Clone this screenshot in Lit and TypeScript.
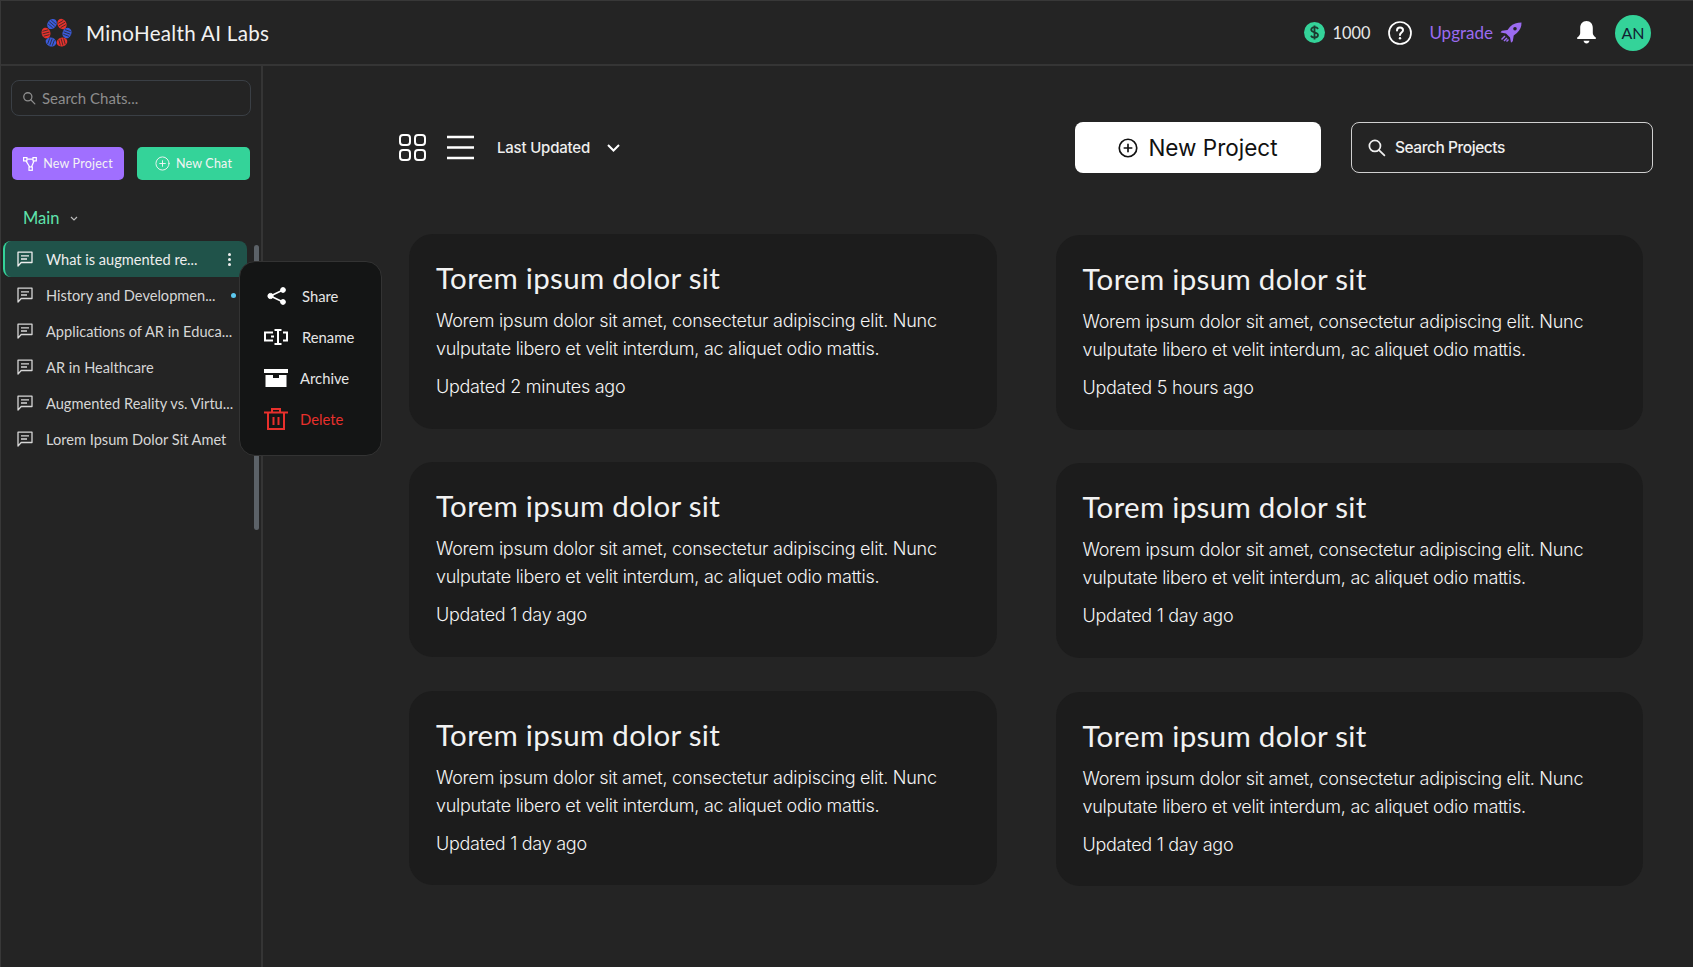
import { LitElement, css, html, svg } from "lit";
import { customElement } from "lit/decorators.js";

const CHATS = [
  "What is augmented re...",
  "History and Developmen...",
  "Applications of AR in Educa...",
  "AR in Healthcare",
  "Augmented Reality vs. Virtu...",
  "Lorem Ipsum Dolor Sit Amet",
];

const LEFT_TIMES = ["Updated 2 minutes ago", "Updated 1 day ago", "Updated 1 day ago"];
const RIGHT_TIMES = ["Updated 5 hours ago", "Updated 1 day ago", "Updated 1 day ago"];

const searchIcon = (size: number) => html`<svg width=${size} height=${size} viewBox="0 0 24 24" fill="none" stroke="currentColor" stroke-width="2.2" stroke-linecap="round"><circle cx="10" cy="10" r="7"></circle><path d="M15.5 15.5L22 22"></path></svg>`;

const plusCircle = (size: number, sw: number) => html`<svg width=${size} height=${size} viewBox="0 0 24 24" fill="none" stroke="currentColor" stroke-width=${sw} stroke-linecap="round"><circle cx="12" cy="12" r="10.5"></circle><path d="M12 7.5v9M7.5 12h9"></path></svg>`;

const chatIcon = html`<svg class="chat-icon" width="16" height="16" viewBox="0 0 16 16" fill="none" stroke="currentColor" stroke-width="1.3"><path d="M1 1.2h14v10.3H4.2L1 15z" stroke-linejoin="round"></path><path d="M4 4.8h8M4 8h6"></path></svg>`;

const logoPods = [
  { x: 52, y: 24, rot: 40, c: "#3b5bdb" },
  { x: 62, y: 24, rot: -30, c: "#e5322d" },
  { x: 67, y: 33, rot: 20, c: "#3b5bdb" },
  { x: 62, y: 42, rot: 75, c: "#e5322d" },
  { x: 51, y: 42, rot: -70, c: "#3b5bdb" },
  { x: 46, y: 33, rot: -15, c: "#e5322d" },
];

const logo = html`<svg class="logo" width="32" height="32" viewBox="40 17 32 32">
  ${logoPods.map(
    (p) => svg`<g transform="translate(${p.x} ${p.y}) rotate(${p.rot})">
      <ellipse rx="4.4" ry="5.4" fill=${p.c}></ellipse>
      <path d="M-3 -2.5L3 -2.5M-3.6 0L3.6 0M-3 2.5L3 2.5" stroke="#242424" stroke-width="0.7"></path>
    </g>`
  )}
</svg>`;

@customElement("app-root")
export class AppRoot extends LitElement {
  static override styles = css`
    :host {
      display: flex;
      flex-direction: column;
      height: 967px;
      box-sizing: border-box;
      overflow: hidden;
      background: #242424;
      border-top: 1px solid #383838;
      border-left: 1px solid #383838;
      font-family: "Lato", "Noto Sans", sans-serif;
      color: #fff;
    }

    * {
      box-sizing: border-box;
    }

    .topbar {
      display: flex;
      align-items: center;
      flex: none;
      height: 65px;
      padding: 0 42px 0 39px;
      border-bottom: 2px solid #353535;
    }

    .logo {
      margin-right: 14px;
    }

    .brand {
      font-size: 20.6px;
      letter-spacing: 0.3px;
      color: #f2f2f2;
    }

    .top-right {
      display: flex;
      align-items: center;
      margin-left: auto;
    }

    .credits {
      margin-left: 8px;
      font-size: 16.3px;
      color: #e8e8e8;
    }

    .help {
      margin-left: 18px;
    }

    .upgrade {
      margin-left: 17px;
      font-size: 17px;
      color: #9b6bf0;
    }

    .rocket {
      margin-left: 7px;
    }

    .bell {
      margin-left: 55px;
    }

    .avatar {
      display: flex;
      align-items: center;
      justify-content: center;
      width: 36px;
      height: 36px;
      margin-left: 19px;
      border-radius: 50%;
      background: #34d399;
      color: #123;
      font-size: 16px;
    }

    .body {
      display: flex;
      flex: 1;
      min-height: 0;
    }

    .sidebar {
      position: relative;
      flex: none;
      width: 262px;
      padding-top: 14px;
      border-right: 2px solid #353535;
    }

    .chat-search {
      display: flex;
      align-items: center;
      gap: 6px;
      width: 240px;
      height: 36px;
      margin-left: 10px;
      padding-left: 10px;
      border: 1px solid #3a3f45;
      border-radius: 8px;
      color: #8d8d8d;
      font-size: 15px;
    }

    .actions {
      display: flex;
      justify-content: space-between;
      width: 238px;
      margin: 31px 0 0 11px;
    }

    .action {
      display: flex;
      align-items: center;
      justify-content: center;
      gap: 6px;
      width: 112px;
      height: 33px;
      border-radius: 5px;
      font-size: 12.5px;
      letter-spacing: 0.2px;
      color: #f4f4f4;
    }

    .action.purple {
      background: #a06fff;
    }

    .action.green {
      width: 113px;
      background: #34d399;
    }

    .section {
      display: flex;
      align-items: center;
      gap: 11px;
      height: 20px;
      margin: 28px 0 13px 22px;
      font-size: 16.5px;
      color: #5fe3ac;
    }

    .chat-list {
      display: flex;
      flex-direction: column;
      width: 244px;
      margin-left: 2px;
    }

    .chat {
      display: flex;
      align-items: center;
      height: 36px;
      padding-left: 14px;
      font-size: 14.6px;
      color: #d6d6d6;
      white-space: nowrap;
    }

    .chat.active {
      border-left: 2px solid #34d399;
      border-radius: 8px;
      padding-left: 12px;
      background: #20534a;
      color: #eee;
    }

    .chat-icon {
      flex: none;
      margin-right: 13px;
    }

    .kebab {
      display: flex;
      flex-direction: column;
      gap: 2px;
      margin-left: auto;
      margin-right: 16px;
    }

    .kebab i {
      width: 3px;
      height: 3px;
      border-radius: 50%;
      background: #eee;
    }

    .dot {
      position: absolute;
      left: 230px;
      top: 227px;
      width: 5px;
      height: 5px;
      border-radius: 50%;
      background: #5cc8ef;
    }

    .thumb {
      position: absolute;
      left: 253px;
      top: 179px;
      width: 5px;
      height: 285px;
      border-radius: 3px;
      background: #5c6268;
    }

    .menu {
      position: absolute;
      left: 238px;
      top: 195px;
      display: flex;
      flex-direction: column;
      width: 143px;
      height: 195px;
      padding-top: 13px;
      border: 1px solid #333;
      border-radius: 16px;
      background: #141515;
      font-size: 14.8px;
      color: #e6e6e6;
    }

    .menu-item {
      display: flex;
      align-items: center;
      height: 41px;
      padding-left: 24px;
    }

    .menu-item svg {
      flex: none;
      margin-right: 12px;
    }

    .menu-item .share-icon {
      margin-left: 3px;
      margin-right: 15px;
    }

    .menu-item .rename-icon {
      margin-right: 14px;
    }

    .menu-item.delete {
      color: #e8302c;
    }

    .main {
      flex: 1;
      min-width: 0;
      padding: 56px 40px 0 136px;
    }

    .toolbar {
      display: flex;
      align-items: center;
      height: 51px;
    }

    .sort {
      margin-left: 23px;
      font-family: "Inter", sans-serif;
      font-size: 15px;
      font-weight: 500;
      letter-spacing: -0.2px;
      color: #eee;
    }

    .sort-chevron {
      margin-left: 17px;
    }

    .view-list {
      margin-left: 21px;
    }

    .new-project {
      display: flex;
      align-items: center;
      justify-content: center;
      gap: 10px;
      width: 246px;
      height: 51px;
      margin-left: auto;
      border-radius: 8px;
      background: #fff;
      color: #111;
      font-family: "Inter", sans-serif;
      font-size: 22.5px;
    }

    .project-search {
      display: flex;
      align-items: center;
      gap: 9px;
      width: 302px;
      height: 51px;
      margin-left: 30px;
      padding-left: 15px;
      border: 1px solid #d0d0d0;
      border-radius: 8px;
      color: #f0f0f0;
      font-family: "Inter", sans-serif;
      font-size: 15.5px;
      font-weight: 500;
      letter-spacing: -0.45px;
    }

    .columns {
      display: flex;
      gap: 59px;
      margin: 61px 10px 0 10px;
    }

    .column {
      display: flex;
      flex: 1;
      flex-direction: column;
      gap: 33.8px;
    }

    .column + .column {
      padding-top: 1px;
    }

    .card {
      height: 194.5px;
      padding: 24px 27px 0;
      border-radius: 24px;
      background: #1c1c1c;
    }

    .card h2 {
      margin: 0;
      font-size: 29.5px;
      font-weight: 400;
      line-height: 40px;
      letter-spacing: 0.3px;
      color: #f2f2f2;
    }

    .card p {
      margin: 9px 0 0;
      font-family: "Inter", sans-serif;
      font-size: 18px;
      font-weight: 300;
      line-height: 28px;
      letter-spacing: -0.27px;
      color: #f4f4f4;
    }

    .card .time {
      margin-top: 10px;
    }
  `;

  private renderCard(time: string) {
    return html`<article class="card">
      <h2>Torem ipsum dolor sit</h2>
      <p>Worem ipsum dolor sit amet, consectetur adipiscing elit. Nunc vulputate libero et velit interdum, ac aliquet odio mattis.</p>
      <p class="time">${time}</p>
    </article>`;
  }

  override render() {
    return html`
      <header class="topbar">
        ${logo}
        <span class="brand">MinoHealth AI Labs</span>
        <div class="top-right">
          <svg width="21" height="21" viewBox="0 0 21 21"><circle cx="10.5" cy="10.5" r="10.5" fill="#34d399"></circle><path d="M14 7c-.6-1.3-2-1.8-3.5-1.8C8.6 5.200 7.200 6.200 7.200 7.800c0 3.400 6.800 1.900 6.800 5.300 0 1.600-1.500 2.500-3.500 2.500-1.700 0-3-.7-3.600-2M10.500 3.500v14" fill="none" stroke="#1c3a30" stroke-width="1.800"></path></svg>
          <span class="credits">1000</span>
          <svg class="help" width="24" height="24" viewBox="0 0 24 24" fill="none" stroke="#fff" stroke-width="1.700"><circle cx="12" cy="12" r="11"></circle><path d="M9 9.500c0-1.800 1.300-3 3-3s3 1.100 3 2.700c0 2.300-3 2.500-3 4.800" stroke-linecap="round" stroke-width="2"></path><circle cx="12" cy="17.300" r="1.200" fill="#fff" stroke="none"></circle></svg>
          <span class="upgrade">Upgrade</span>
          <svg class="rocket" width="22" height="21" viewBox="0 0 22 21" fill="#9b6bf0"><path d="M21.500 .5c-4.500 0-8.500 1-11.500 4.300L7.500 8 1.800 8.800 .5 10.500 6 11.500l4 4 1 5.200 1.800-1.400.9-5.800 3.200-2.600C20.500 7.900 21.500 4.500 21.500 .5z"></path><circle cx="15" cy="6.800" r="1.800" fill="#242424"></circle><path d="M5 14l-3.500 3.500M7 16l-3 3M8.500 17.500l-2 2" stroke="#9b6bf0" stroke-width="1.500"></path></svg>
          <svg class="bell" width="19" height="23" viewBox="0 0 19 23" fill="#fff"><path d="M9.500 0C5.500 0 3.200 3 3.200 7v5c0 1.800-1 3-3 4.500V18h18.600v-1.500c-2-1.500-3-2.700-3-4.500V7c0-4-2.300-7-6.300-7z"></path><path d="M6.500 19.800h6c-.3 1.600-1.500 2.700-3 2.700s-2.700-1.100-3-2.700z"></path></svg>
          <div class="avatar">AN</div>
        </div>
      </header>
      <div class="body">
        <aside class="sidebar">
          <div class="chat-search">${searchIcon(14)}<span>Search Chats...</span></div>
          <div class="actions">
            <div class="action purple">
              <svg width="14" height="14" viewBox="0 0 14 14" fill="none" stroke="#fff" stroke-width="1.200"><rect x=".6" y=".6" width="3.300" height="3.300"></rect><rect x="10" y=".6" width="3.300" height="3.300"></rect><rect x="6" y="10" width="3.300" height="3.300"></rect><path d="M3.900 2.200H10M3 3.900L6.700 10M11 3.900L8.500 10"></path></svg>
              New Project
            </div>
            <div class="action green">${plusCircle(15, 1.5)} New Chat</div>
          </div>
          <div class="section">
            Main
            <svg width="8" height="5" viewBox="0 0 8 5" fill="none" stroke="#bbb" stroke-width="1.200"><path d="M1 1l3 3 3-3"></path></svg>
          </div>
          <div class="chat-list">
            ${CHATS.map(
              (title, i) => html`<div class="chat ${i === 0 ? "active" : ""}">
                ${chatIcon}<span>${title}</span>
                ${i === 0 ? html`<div class="kebab"><i></i><i></i><i></i></div>` : ""}
              </div>`
            )}
          </div>
          <span class="dot"></span>
          <div class="thumb"></div>
          <div class="menu">
            <div class="menu-item">
              <svg class="share-icon" width="20" height="18" viewBox="0 0 20 18" fill="#fff" stroke="#fff"><circle cx="16" cy="3" r="2.400"></circle><circle cx="3.500" cy="9" r="2.600"></circle><circle cx="16" cy="15" r="2.400"></circle><path d="M3.500 9L16 3M3.500 9L16 15" stroke-width="1.500"></path></svg>
              Share
            </div>
            <div class="menu-item">
              <svg class="rename-icon" width="24" height="16" viewBox="0 0 24 16" fill="none" stroke="#fff" stroke-width="2"><path d="M9 3.500H1v8h8M7 7.500h3M19 3.500h4v8h-4M14 1v14M10.500 1h7M10.500 15h7"></path></svg>
              Rename
            </div>
            <div class="menu-item">
              <svg width="24" height="18" viewBox="0 0 24 18" fill="#fff"><rect width="24" height="4"></rect><path d="M1.500 6H9v3h6V6h7.500v12h-21z"></path></svg>
              Archive
            </div>
            <div class="menu-item delete">
              <svg width="24" height="22" viewBox="0 0 24 22" fill="none" stroke="#e8302c" stroke-width="2"><path d="M0 4.500h24M8 4V1h8v3M4 5v16h16V5M9.500 9v8M14.500 9v8"></path></svg>
              Delete
            </div>
          </div>
        </aside>
        <main class="main">
          <div class="toolbar">
            <svg width="27" height="27" viewBox="0 0 27 27" fill="none" stroke="#fff" stroke-width="2"><rect x="1" y="1" width="10" height="10" rx="3"></rect><rect x="16" y="1" width="10" height="10" rx="3"></rect><rect x="1" y="16" width="10" height="10" rx="3"></rect><rect x="16" y="16" width="10" height="10" rx="3"></rect></svg>
            <svg class="view-list" width="27" height="25" viewBox="0 0 27 25" fill="none" stroke="#fff" stroke-width="2.500"><path d="M0 2h27M0 12.500h27M0 23h27"></path></svg>
            <span class="sort">Last Updated</span>
            <svg class="sort-chevron" width="13" height="8" viewBox="0 0 13 8" fill="none" stroke="#fff" stroke-width="2"><path d="M1 1l5.500 5.500L12 1"></path></svg>
            <div class="new-project">${plusCircle(20, 2)} New Project</div>
            <div class="project-search">${searchIcon(19)}<span>Search Projects</span></div>
          </div>
          <div class="columns">
            <div class="column">${LEFT_TIMES.map((t) => this.renderCard(t))}</div>
            <div class="column">${RIGHT_TIMES.map((t) => this.renderCard(t))}</div>
          </div>
        </main>
      </div>
    `;
  }
}

declare global {
  interface HTMLElementTagNameMap {
    "app-root": AppRoot;
  }
}
